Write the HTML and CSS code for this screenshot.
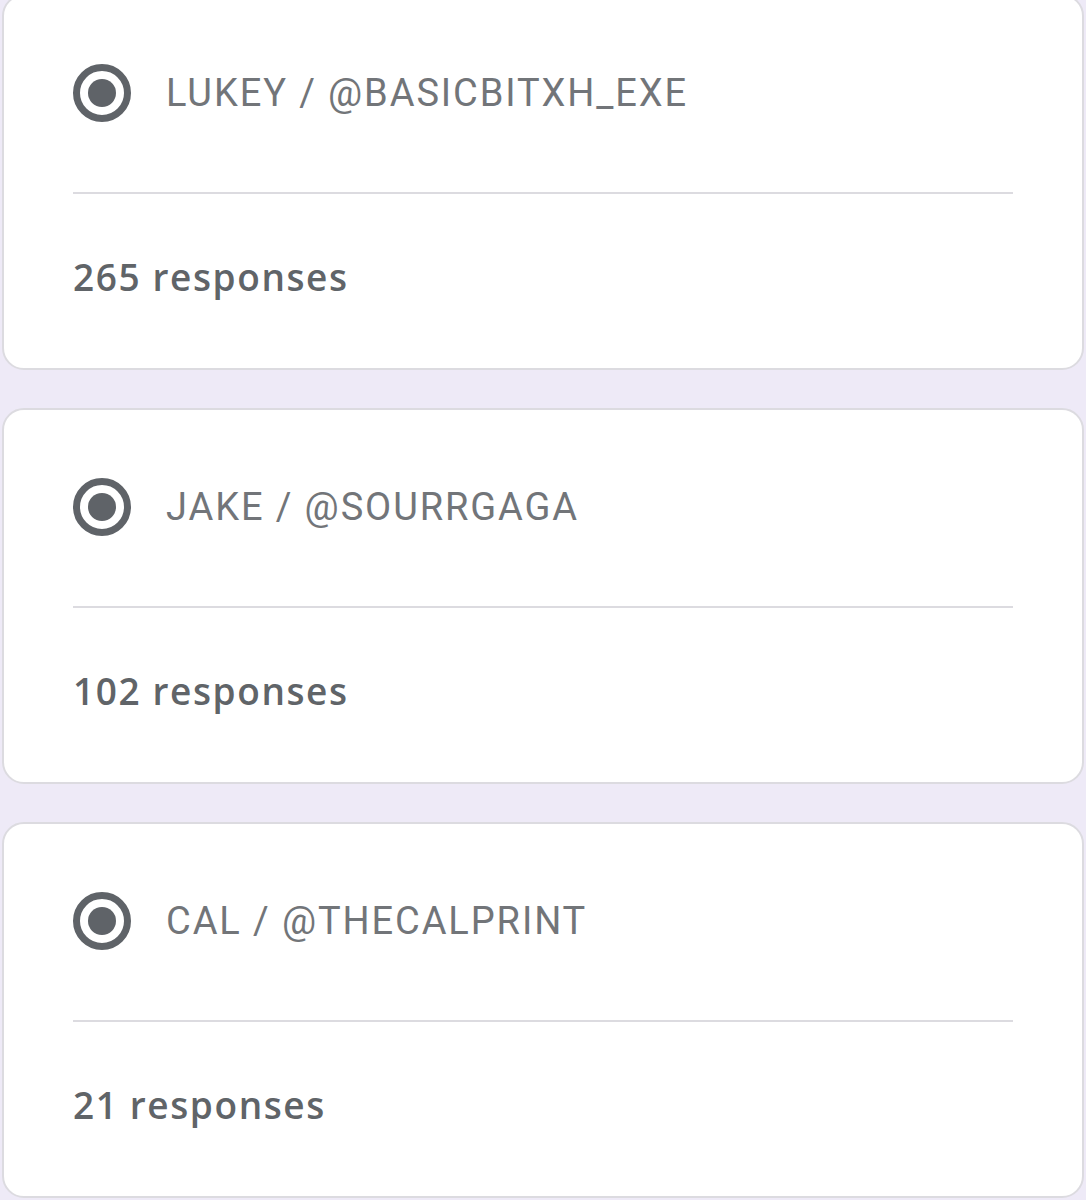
FILE: index.html
```html
<!DOCTYPE html>
<html lang="en">
<head>
<meta charset="utf-8">
<title>Responses</title>
<link rel="stylesheet" href="styles.css">
</head>
<body>
<main class="page">
  <section class="card">
    <div class="option">
      <span class="radio"><span class="radio-dot"></span></span>
      <span class="label">LUKEY / @BASICBITXH_EXE</span>
    </div>
    <hr class="divider">
    <p class="count">265 responses</p>
  </section>
  <section class="card">
    <div class="option">
      <span class="radio"><span class="radio-dot"></span></span>
      <span class="label">JAKE / @SOURRGAGA</span>
    </div>
    <hr class="divider">
    <p class="count">102 responses</p>
  </section>
  <section class="card">
    <div class="option">
      <span class="radio"><span class="radio-dot"></span></span>
      <span class="label">CAL / @THECALPRINT</span>
    </div>
    <hr class="divider">
    <p class="count">21 responses</p>
  </section>
</main>
</body>
</html>
```

FILE: styles.css
```css
html, body {
  margin: 0;
  padding: 0;
  background: #eeeaf7;
}

.page {
  display: flex;
  flex-direction: column;
  gap: 38px;
  padding: 0 2px;
  margin-top: -6px;
}

.card {
  box-sizing: border-box;
  height: 376px;
  background: #ffffff;
  border: 2px solid #dcdbe0;
  border-radius: 22px;
  padding: 68px 69px 0 69px;
  display: flex;
  flex-direction: column;
}

.option {
  display: flex;
  align-items: center;
  gap: 35px;
  height: 58px;
}

.radio {
  box-sizing: border-box;
  width: 58px;
  height: 58px;
  border: 7px solid #5f6368;
  border-radius: 50%;
  display: flex;
  align-items: center;
  justify-content: center;
  flex-shrink: 0;
}

.radio-dot {
  width: 28px;
  height: 28px;
  border-radius: 50%;
  background: #5f6368;
}

.label {
  font-family: Roboto, "Liberation Sans", sans-serif;
  font-size: 38px;
  letter-spacing: 1.9px;
  color: #727579;
  line-height: 58px;
}

.divider {
  margin: 70px 0 0 0;
  border: 0;
  height: 2px;
  background: #dcdbe0;
}

.count {
  margin: 62px 0 0 0;
  font-family: "Open Sans", Roboto, sans-serif;
  font-weight: 600;
  font-size: 37px;
  letter-spacing: 1.6px;
  line-height: 42px;
  color: #606468;
}
```
